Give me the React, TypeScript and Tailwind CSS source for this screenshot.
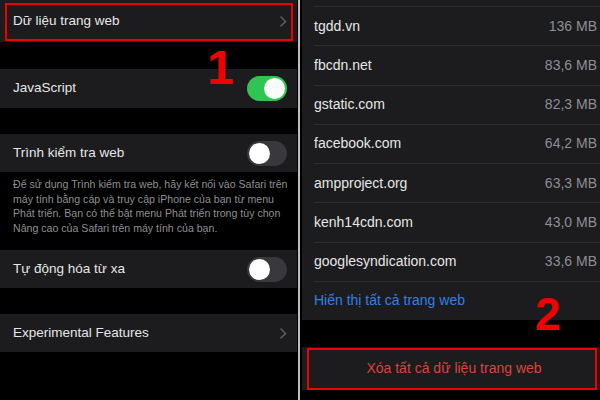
type Site = { name: string; size: string };

const sites: Site[] = [
  { name: "tgdd.vn", size: "136 MB" },
  { name: "fbcdn.net", size: "83,6 MB" },
  { name: "gstatic.com", size: "82,3 MB" },
  { name: "facebook.com", size: "64,2 MB" },
  { name: "ampproject.org", size: "63,3 MB" },
  { name: "kenh14cdn.com", size: "43,0 MB" },
  { name: "googlesyndication.com", size: "33,6 MB" },
];

function Chevron() {
  return (
    <svg width="7" height="11" viewBox="0 0 7 11" fill="none">
      <path d="M1 1l4.5 4.5L1 10" stroke="#5c5c60" strokeWidth="1.6" strokeLinecap="round" strokeLinejoin="round" />
    </svg>
  );
}

function Toggle({ on }: { on: boolean }) {
  return (
    <div
      className={
        on
          ? "w-[40px] h-[25px] rounded-full bg-[#30c552] flex items-center justify-end px-[2px]"
          : "w-[40px] h-[25px] rounded-full bg-[#39393d] flex items-center justify-start px-[2px]"
      }
    >
      <div className="w-[21px] h-[21px] rounded-full bg-white" />
    </div>
  );
}

function Row({ label, children, h }: { label: string; children?: React.ReactNode; h: string }) {
  return (
    <div className={`${h} bg-[#1c1c1e] flex items-center justify-between pl-[13px] pr-[10px]`}>
      <span className="text-[13.5px] text-[#e6e6e6]">{label}</span>
      {children}
    </div>
  );
}

export default function App() {
  return (
    <div
      className="w-[600px] h-[400px] bg-black flex overflow-hidden"
      style={{ fontFamily: '"Liberation Sans", Arial, sans-serif' }}
    >
      {/* left screen */}
      <div className="relative w-[297px] flex flex-col">
        <div className="relative h-[42px] bg-[#1c1c1e] flex items-center justify-between pl-[13px] pr-[10px]">
          <span className="text-[13.5px] text-[#e6e6e6]">Dữ liệu trang web</span>
          <Chevron />
          <div className="absolute left-[5px] top-[3px] w-[288px] h-[38px] border-2 border-[#ee0000]" />
        </div>
        <div className="h-[27px]" />
        <Row label="JavaScript" h="h-[39px]">
          <Toggle on />
        </Row>
        <div className="h-[26px]" />
        <Row label="Trình kiểm tra web" h="h-[38px]">
          <Toggle on={false} />
        </Row>
        <p className="h-[78px] pt-[5px] pl-[13px] text-[10.6px] leading-[14.5px] text-[#8e8e93] whitespace-nowrap">
          Để sử dụng Trình kiểm tra web, hãy kết nối vào Safari trên
          <br />
          máy tính bằng cáp và truy cập iPhone của bạn từ menu
          <br />
          Phát triển. Bạn có thể bật menu Phát triển trong tùy chọn
          <br />
          Nâng cao của Safari trên máy tính của bạn.
        </p>
        <Row label="Tự động hóa từ xa" h="h-[38px]">
          <Toggle on={false} />
        </Row>
        <div className="h-[26px]" />
        <Row label="Experimental Features" h="h-[38px]">
          <Chevron />
        </Row>
        <span className="absolute left-[207px] top-[44px] text-[48px] font-bold leading-none text-[#f20000]">1</span>
      </div>

      {/* divider */}
      <div className="w-[1px]" />
      <div className="w-[2px] bg-[#bdbdbd]" />
      <div className="w-[2px]" />

      {/* right screen */}
      <div className="relative flex-1 flex flex-col">
        <div className="bg-[#1c1c1e]">
          <div className="h-[6px]" />
          {sites.map((s) => (
            <div key={s.name} className="ml-[12px] h-[39.25px] border-t border-[#2c2c2e] flex items-center justify-between pr-[3px]">
              <span className="text-[14px] text-[#e6e6e6]">{s.name}</span>
              <span className="text-[14px] text-[#8e8e93]">{s.size}</span>
            </div>
          ))}
          <div className="ml-[12px] h-[39px] border-t border-[#2c2c2e] flex items-center">
            <span className="text-[14px] text-[#2f80e8]">Hiển thị tất cả trang web</span>
          </div>
        </div>
        <div className="h-[27px]" />
        <div className="relative h-[43px] bg-[#1c1c1e] flex items-center justify-center pl-[6px]">
          <span className="text-[14px] text-[#d9443c]">Xóa tất cả dữ liệu trang web</span>
          <div className="absolute left-[5px] right-[3px] top-[1px] bottom-0 border-2 border-[#ee0000]" />
        </div>
        <span className="absolute left-[233px] top-[291px] text-[46px] font-bold leading-none text-[#f20000]">2</span>
      </div>
    </div>
  );
}
